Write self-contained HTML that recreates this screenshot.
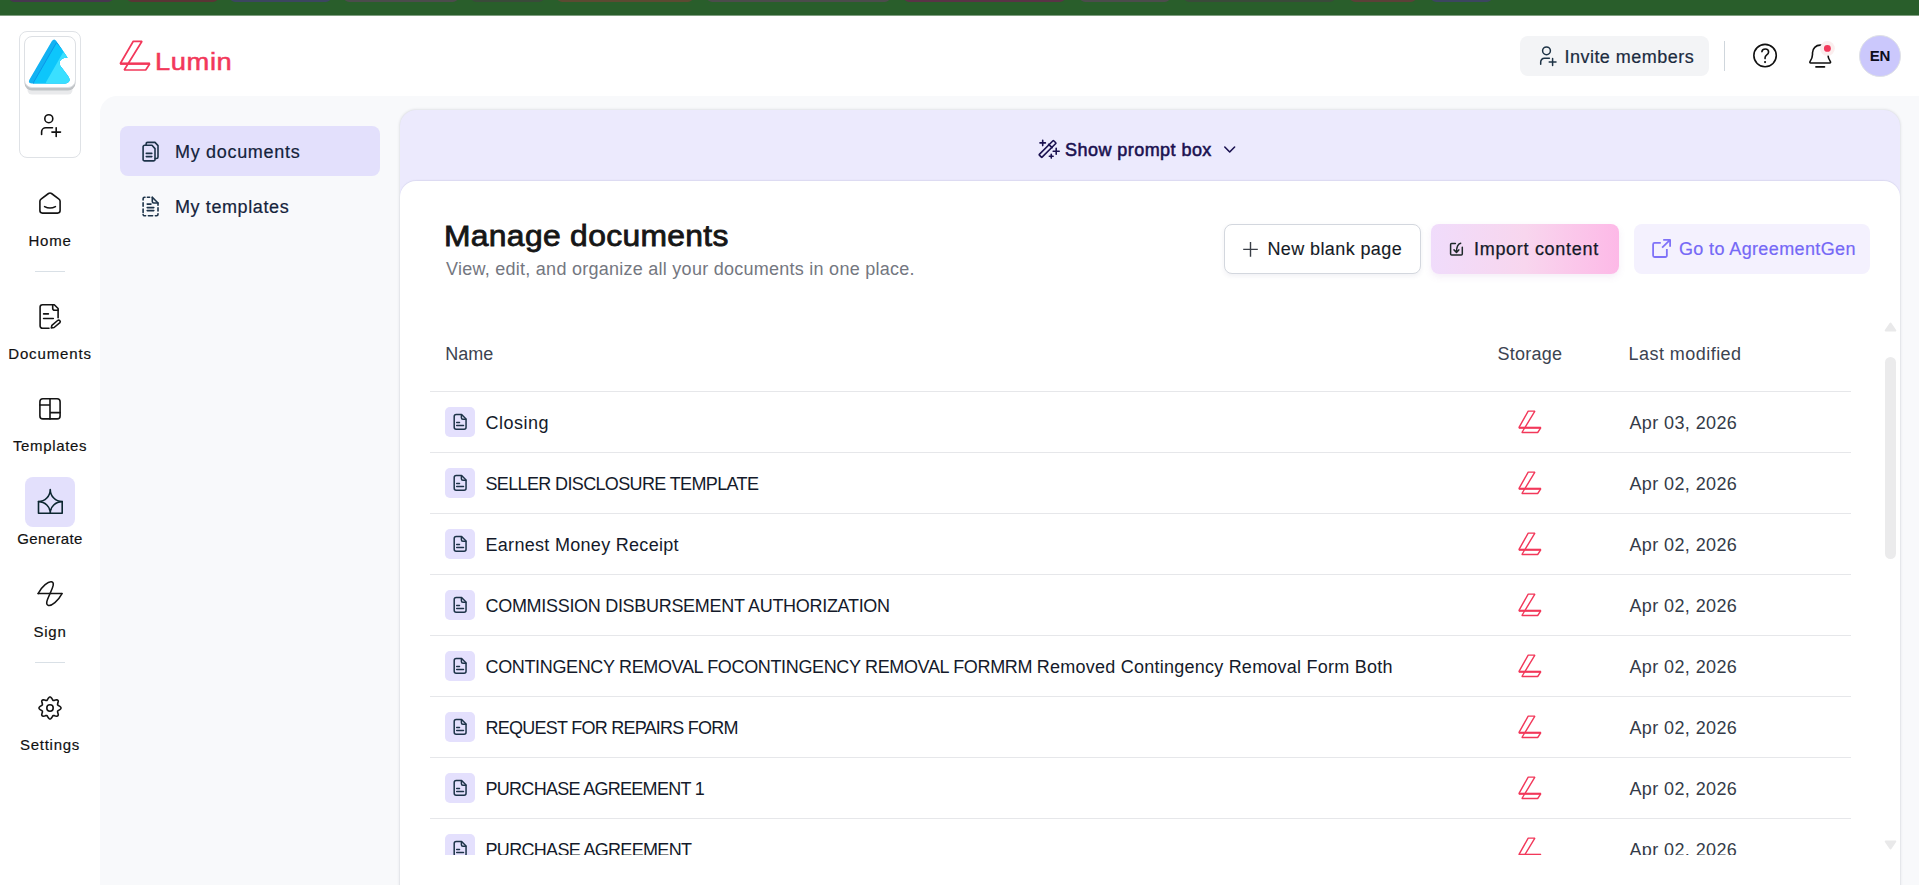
<!DOCTYPE html>
<html lang="en">
<head>
<meta charset="utf-8">
<title>Lumin - Manage documents</title>
<style>
*{box-sizing:border-box;margin:0;padding:0}
html,body{width:1919px;height:885px;overflow:hidden;background:#fff;font-family:"Liberation Sans",Arial,sans-serif;color:#111827}
svg{position:absolute;display:block;overflow:visible}
#topbar{position:absolute;left:0;top:0;width:1919px;height:16px;background:linear-gradient(#295e2b 0,#295e2b 15px,#7f9e80 15px);overflow:hidden}
#topbar i{position:absolute;top:-6px;height:8.2px;border-radius:0 0 5px 5px;display:block}
#graybg{position:absolute;left:100px;top:96px;width:1819px;height:789px;background:#f8f9fb;border-top-left-radius:17px}
#ws{position:absolute;left:19px;top:31px;width:62px;height:127px;border:1px solid #dfe2e6;border-radius:8px;background:#fff}
#avatar{position:absolute;left:24px;top:36px;width:52px;height:52px;border-radius:8px;background:#fff;border:1px solid #dde0e4;box-shadow:0 3px 0 -.5px #c0c3c6,0 10px 0 -3.5px #e9eaec}
.navlbl{position:absolute;left:0;width:100px;text-align:center;font-size:15px;color:#111;line-height:18px;-webkit-text-stroke:.18px #111;white-space:nowrap}
.raildiv{position:absolute;left:35px;width:30px;height:1px;background:#d9e0e6}
#genbg{position:absolute;left:25px;top:477px;width:50px;height:50px;border-radius:8px;background:#e3e0fc}
.st14 g, g.k{fill:none;stroke:#141414;stroke-width:1.6;stroke-linecap:round;stroke-linejoin:round}
#pill{position:absolute;left:120px;top:126px;width:260px;height:50px;border-radius:8px;background:#e3e0fc}
.sidelbl{position:absolute;left:175px;font-size:18px;color:#14233b;line-height:22px;white-space:nowrap;letter-spacing:.6px;-webkit-text-stroke:.2px #14233b}
#lav{position:absolute;left:400px;top:110px;width:1500px;height:780px;background:#eceafd;border-radius:16px 16px 0 0;box-shadow:0 0 3px rgba(50,55,75,.22)}
#card{position:absolute;left:400px;top:181px;width:1500px;height:710px;background:#fff;border-radius:16px 16px 0 0;box-shadow:0 -1px 1px rgba(190,188,220,.35)}
#title{position:absolute;left:444px;top:216.3px;font-size:29px;font-weight:400;color:#161616;-webkit-text-stroke:.8px #161616;line-height:40px;white-space:nowrap;letter-spacing:.3px;transform-origin:0 50%;transform:scaleX(1.097)}
#sub{position:absolute;left:446px;top:258px;font-size:18px;color:#74777f;line-height:22px;white-space:nowrap;letter-spacing:.26px}
.btn{position:absolute;top:224px;height:50px;border-radius:8px}
.btn span{position:absolute;top:14px;font-size:18px;line-height:22px;white-space:nowrap}
.row{position:absolute;left:30px;width:1421px;height:61px;border-bottom:1px solid #e6e7ea}
.row .ic{left:15px;top:15px;width:30px;height:30px}
.row .nm{position:absolute;left:55.5px;top:20px;font-size:18px;line-height:22px;color:#141a2a;white-space:nowrap}
.row .st{left:1085px;top:16px;width:30px;height:28px}
.row .dt{position:absolute;left:1199.4px;top:20px;font-size:18px;line-height:22px;color:#343b48;white-space:nowrap;letter-spacing:.4px}
.th{position:absolute;top:342.5px;font-size:18px;line-height:22px;color:#3c4350;white-space:nowrap}
#clip{position:absolute;left:400px;top:300px;width:1500px;height:555px;overflow:hidden}
</style>
</head>
<body>
<div id="topbar"><i style="left:9px;width:104px;background:#47374f"></i><i style="left:127px;width:91px;background:#5a3535"></i><i style="left:230px;width:101px;background:#3c4660"></i><i style="left:344px;width:114px;background:#4c4c4c"></i><i style="left:471px;width:73px;background:#3a4a3a"></i><i style="left:557px;width:136px;background:#5c4a32"></i><i style="left:707px;width:183px;background:#4c4c4c"></i><i style="left:904px;width:161px;background:#5a3346"></i><i style="left:1080px;width:90px;background:#4c4c4c"></i><i style="left:1184px;width:151px;background:#3a4a3a"></i><i style="left:1350px;width:66px;background:#5c4038"></i><i style="left:1431px;width:61px;background:#3c4660"></i></div>
<div id="graybg"></div>

<!-- left rail -->
<div id="ws"></div>
<div id="avatar"></div>
<svg style="left:24px;top:36px;width:52px;height:52px" viewBox="24 36 52 52">
<defs><clipPath id="tri"><path d="M51.9 41Q54.2 37.9 56.3 41L67.6 57.7Q60.5 57.5 59.6 62.5Q59.5 65.5 62 68L68 76Q70.5 79.5 69 81.5Q68 83.5 65 83.5H32Q27.5 83.5 29.5 79.5Z"/></clipPath></defs>
<g clip-path="url(#tri)"><rect x="24" y="36" width="52" height="52" fill="#12b2f3"/><path d="M56.5 42.5L72 60V86H33L33.8 81.9Z" fill="#0dc6fb" stroke="#0b93e6" stroke-width=".9"/><path d="M63 52.4L74 52V86H44.6L46.1 82Z" fill="#3adfff"/></g>
</svg>
<svg style="left:36px;top:110px;width:28px;height:28px" viewBox="36 110 28 28"><g class="k" style="stroke:#111;stroke-width:1.6"><circle cx="48.8" cy="118.7" r="4"/><path d="M41.6 134.4V132a4.2 4.2 0 0 1 4.2-4.2H52.5"/><path d="M51.9 132.1H60.5M56.2 127.8V136.4"/></g></svg>

<svg style="left:36px;top:189px;width:28px;height:28px" viewBox="0 0 28 28"><g class="k"><path d="M3.9 12.3V21.6a2.5 2.5 0 0 0 2.5 2.5H21.6a2.5 2.5 0 0 0 2.5-2.5V12.3a2.6 2.6 0 0 0-1.1-2.1L15.5 4.5a2.6 2.6 0 0 0-3 0L5 10.2a2.6 2.6 0 0 0-1.1 2.1Z"/><path d="M8.6 17.6Q14 20.5 19.4 17.6"/></g></svg>
<div class="navlbl" style="top:231.6px;letter-spacing:.75px">Home</div>
<div class="raildiv" style="top:271px"></div>
<svg style="left:36px;top:302px;width:28px;height:28px" viewBox="0 0 28 28"><g class="k"><path d="M13 26.3H6.5a2.4 2.4 0 0 1-2.4-2.4V5.1a2.4 2.4 0 0 1 2.4-2.4H18.3L22.1 6.5V15.8"/><path d="M16.7 3.2V6.3a2 2 0 0 0 2 2H22.1"/><path d="M7.6 11.9H12.4M7.6 16.5H17.3"/><path d="M15.3 25.9L15.9 23.3L21.6 18.5a1.6 1.6 0 0 1 2.3 2.2L18.1 25.5Z"/></g></svg>
<div class="navlbl" style="top:344.6px;letter-spacing:.85px">Documents</div>
<svg style="left:36px;top:395px;width:28px;height:28px" viewBox="0 0 28 28"><g class="k"><rect x="3.9" y="3.7" width="20.2" height="20.2" rx="3"/><path d="M14 3.7V23.9M3.9 10H14M14 17.6H24.1"/></g></svg>
<div class="navlbl" style="top:437.3px;letter-spacing:.65px">Templates</div>
<div id="genbg"></div>
<svg style="left:36px;top:488px;width:28px;height:28px" viewBox="0 0 28 28"><g class="k" style="stroke:#0c2630"><path d="M14.25 1.5A11.95 12.1 0 0 0 26.2 13.6A11.95 11.7 0 0 0 14.25 25.3A11.75 11.7 0 0 0 2.5 13.6A11.75 12.1 0 0 0 14.25 1.5Z"/><path d="M2.5 13.6V25.3H26.2V13.6"/></g></svg>
<div class="navlbl" style="top:530.2px;letter-spacing:.4px">Generate</div>
<svg style="left:36px;top:580px;width:28px;height:28px" viewBox="0 0 28 28"><g class="k" style="stroke-width:1.5"><path d="M2.1 13.6H26"/><path d="M2.1 13.6C6 6 12.5 1.2 15.5 1.8C19.5 2.6 16 9 14 13.6C12 18.2 8.5 24.6 12.5 25.4C15.5 26 22 21.2 26 13.6"/></g></svg>
<div class="navlbl" style="top:623px;letter-spacing:.8px">Sign</div>
<div class="raildiv" style="top:662px"></div>
<svg style="left:36px;top:693.6px;width:28px;height:28px" viewBox="0 0 28 28"><g class="k"><path d="M14.0 2.9L15.0 3.4L15.9 4.5L16.5 5.7L17.1 6.4L18.1 6.4L19.4 6.0L20.8 5.7L21.8 6.2L22.3 7.2L22.0 8.6L21.6 9.9L21.6 10.9L22.3 11.5L23.5 12.1L24.6 13.0L25.1 14.0L24.6 15.0L23.5 15.9L22.3 16.5L21.6 17.1L21.6 18.1L22.0 19.4L22.3 20.8L21.8 21.8L20.8 22.3L19.4 22.0L18.1 21.6L17.1 21.6L16.5 22.3L15.9 23.5L15.0 24.6L14.0 25.1L13.0 24.6L12.1 23.5L11.5 22.3L10.9 21.6L9.9 21.6L8.6 22.0L7.2 22.3L6.2 21.8L5.7 20.8L6.0 19.4L6.4 18.1L6.4 17.1L5.7 16.5L4.5 15.9L3.4 15.0L2.9 14.0L3.4 13.0L4.5 12.1L5.7 11.5L6.4 10.9L6.4 9.9L6.0 8.6L5.7 7.2L6.2 6.2L7.2 5.7L8.6 6.0L9.9 6.4L10.9 6.4L11.5 5.7L12.1 4.5L13.0 3.4Z"/><circle cx="14" cy="14" r="3.2"/></g></svg>
<div class="navlbl" style="top:736.1px;letter-spacing:.75px">Settings</div>

<!-- header -->
<svg style="left:118px;top:38px;width:36px;height:36px" viewBox="118 38 36 36"><path d="M133.3 41.3H142L124.2 70H145.7L149.8 63.7H120.2Z" fill="none" stroke="#f2385a" stroke-width="1.7" stroke-linejoin="bevel"/><path d="M120.2 63.7H149.8" stroke="#f2385a" stroke-width="2.3"/></svg>
<div id="lumin" style="position:absolute;left:154.5px;top:46.6px;font-size:24.8px;line-height:30px;color:#f2385a;letter-spacing:.55px;white-space:nowrap;-webkit-text-stroke:.55px #f2385a;transform-origin:0 50%;transform:scaleX(1.1)">Lumin</div>

<div style="position:absolute;left:1520px;top:36px;width:189px;height:40px;border-radius:8px;background:#f3f4f6"></div>
<svg style="left:1535px;top:44px;width:24px;height:24px" viewBox="0 0 24 24"><g class="k" style="stroke:#1e3346;stroke-width:1.5"><circle cx="11.5" cy="6.8" r="3.9"/><path d="M5.7 20.2V18a3.7 3.7 0 0 1 3.7-3.7H14.4"/><path d="M14.2 18H21M17.6 14.6V21.4"/></g></svg>
<div style="position:absolute;left:1564.5px;top:45.8px;font-size:18px;line-height:22px;color:#1b2b40;letter-spacing:.47px;white-space:nowrap;-webkit-text-stroke:.2px #1b2b40">Invite members</div>
<div style="position:absolute;left:1724px;top:41px;width:1px;height:30px;background:#cfd6dc"></div>
<svg style="left:1752px;top:43px;width:26px;height:26px" viewBox="0 0 26 26"><g class="k" style="stroke:#111"><circle cx="13.06" cy="12.6" r="11.2"/><path d="M9.9 8.6C10.2 6.9 11.6 6 13.3 6C15.3 6 16.6 7.3 16.6 9C16.6 10.6 15.6 11.4 14.5 12.2C13.5 12.9 13.06 13.6 13.06 14.8V15.6"/></g><circle cx="13.06" cy="19.1" r="1.05" fill="#111"/></svg>
<svg style="left:1806px;top:40px;width:30px;height:30px" viewBox="0 0 30 30"><g class="k" style="stroke:#111"><path d="M4.6 23C3.9 23 3.6 22.2 4 21.6C5.5 19.4 6.5 17.6 6.5 14.5V12.8A7.7 7.7 0 0 1 21.9 12.8V14.5C21.9 17.6 22.9 19.4 24.4 21.6C24.8 22.2 24.5 23 23.8 23Z"/><path d="M9.9 26.9H18.5"/></g><circle cx="21.4" cy="8.4" r="7.4" fill="#fbeeee"/><circle cx="21.4" cy="8.4" r="3.46" fill="#f2385a"/></svg>
<div style="position:absolute;left:1859px;top:35px;width:42px;height:42px;border-radius:50%;background:#cbc8fc;border:1px solid #dfe1e6"></div>
<div style="position:absolute;left:1860px;top:46.7px;width:40px;text-align:center;font-size:15px;font-weight:700;line-height:18px;color:#0d0d1c;letter-spacing:-.1px">EN</div>

<!-- secondary sidebar -->
<div id="pill"></div>
<svg style="left:139px;top:139px;width:24px;height:24px" viewBox="0 0 24 24"><g class="k" style="stroke:#1d3349"><path d="M5.6 6.3H13L16 9.6V20.4a1.5 1.5 0 0 1-1.5 1.5H5.6a1.5 1.5 0 0 1-1.5-1.5V7.8a1.5 1.5 0 0 1 1.5-1.5Z"/><path d="M7.1 6V4.9a1.5 1.5 0 0 1 1.5-1.5H16L19 6.6V18a1.5 1.5 0 0 1-1.5 1.5H16.3"/><path d="M7.3 14.4H12.8M7.3 17.6H12.8"/></g></svg>
<div class="sidelbl" style="top:140.6px;letter-spacing:.69px">My documents</div>
<svg style="left:139px;top:194px;width:24px;height:24px" viewBox="0 0 24 24"><g class="k" style="stroke:#1d3349"><path d="M13.3 3.3L19 9V11.2" /><path d="M13.3 3.3V7.5a1.5 1.5 0 0 0 1.5 1.5H19"/><path d="M10.6 3.3H8.4M6 3.3H5.6a1.5 1.5 0 0 0-1.5 1.5V6M4.1 8.8V12.2M4.1 15V18.4M4.1 20.6a1.5 1.5 0 0 0 1.5 1.2H6.6M9.4 21.8H13.6M16.4 21.8H17.5a1.5 1.5 0 0 0 1.5-1.5V19.8M19 17V13.8"/><path d="M8.2 10.1H12M8.2 13.6H14.8M8.2 16.6H14.8"/></g></svg>
<div class="sidelbl" style="top:195.6px">My templates</div>

<!-- main -->
<div id="lav"></div>
<svg style="left:1036px;top:137px;width:24px;height:24px" viewBox="0 0 24 24"><g class="k" style="stroke:#1a1150;stroke-width:1.6"><rect x="1.4" y="10" width="20.3" height="3.9" rx=".5" transform="rotate(-45 11.54 11.95)"/><path d="M12.6 7.4L16.1 10.7"/><path d="M4 5.9H9.4M6.7 3.2V8.6M17.2 14.25H23.2M20.2 11.25V17.25M13.35 19.2H17.15M15.25 17.3V21.1"/></g></svg>
<div style="position:absolute;left:1065px;top:138.5px;font-size:18px;line-height:22px;color:#1a1150;white-space:nowrap;letter-spacing:.45px;-webkit-text-stroke:.55px #1a1150">Show prompt box</div>
<svg style="left:1222px;top:143px;width:16px;height:14px" viewBox="1222 143 16 14"><path d="M1224.8 147L1229.7 152L1234.6 147" fill="none" stroke="#1a1150" stroke-width="1.6" stroke-linecap="round" stroke-linejoin="round"/></svg>
<div id="card"></div>
<div id="title">Manage documents</div>
<div id="sub">View, edit, and organize all your documents in one place.</div>

<div class="btn" style="left:1224px;width:197px;background:#fff;border:1px solid #d3d7de;box-shadow:0 2px 5px rgba(40,40,100,.07)"><svg style="left:17px;top:16px;width:17px;height:17px" viewBox="0 0 17 17"><path d="M1.2 8.4H15.8M8.5 1.1V15.7" stroke="#3a3f47" stroke-width="1.4" fill="none"/></svg><span style="left:42.4px;top:13px;color:#161b26;letter-spacing:.4px;-webkit-text-stroke:.12px #161b26">New blank page</span></div>
<div class="btn" style="left:1431px;width:188px;background:linear-gradient(90deg,#f0dcfb 0%,#f8d6ee 50%,#fdb9e7 100%);box-shadow:0 3px 7px rgba(150,90,180,.10)"><svg style="left:15px;top:16px;width:20px;height:20px" viewBox="0 0 20 20"><g class="k" style="stroke:#1f2a2a;stroke-width:1.5"><path d="M9.4 3.5H5.6a1 1 0 0 0-1 1V14a1 1 0 0 0 1 1H15.3a1 1 0 0 0 1-1V7.2"/><path d="M14.7 3.3C12 4 10.5 7 10.5 12M8 9.9L10.5 12.4L12.8 9.9"/></g></svg><span style="left:43px;color:#141a28;letter-spacing:.7px;-webkit-text-stroke:.25px #141a28">Import content</span></div>
<div class="btn" style="left:1634px;width:236px;background:#f4f1fe"><svg style="left:14px;top:12px;width:26px;height:26px" viewBox="0 0 26 26"><g class="k" style="stroke:#7f72f8;stroke-width:1.8;stroke-linecap:butt"><path d="M12.8 6.9H6.6a1.5 1.5 0 0 0-1.5 1.5V19.5a1.5 1.5 0 0 0 1.5 1.5H17.35a1.5 1.5 0 0 0 1.5-1.5V13.1"/><path d="M14.1 11.7L22.1 3.9M15.2 3.9H22.1V10.75"/></g></svg><span style="left:45px;color:#7568f6;letter-spacing:.37px;-webkit-text-stroke:.2px #7568f6">Go to AgreementGen</span></div>

<div class="th" style="left:445.3px">Name</div>
<div class="th" style="left:1497.5px;letter-spacing:.24px">Storage</div>
<div class="th" style="left:1628.6px;letter-spacing:.45px">Last modified</div>
<div id="clip">
<div class="row" style="top:31px"></div>
<div class="row" style="top:92px"><svg class="ic" viewBox="0 0 30 30"><rect width="30" height="30" rx="5" fill="#e4e0fd"/><g fill="none" stroke="#1d3349" stroke-width="1.5" stroke-linecap="round" stroke-linejoin="round"><path d="M11.2 7.55H16.6L21.05 12V20.2a2 2 0 0 1-2 2H11.2a2 2 0 0 1-2-2V9.55a2 2 0 0 1 2-2Z"/><path d="M16.4 7.8V10.7a1.5 1.5 0 0 0 1.5 1.5H20.8"/><path d="M11.7 15.4H14.5M11.7 18.4H18.5"/></g></svg><div class="nm"><span style="letter-spacing:0.5px">Closing</span></div><svg class="st" viewBox="0 0 30 28"><path d="M13.2 3.1H19.9L6.9 24.5H22.7L25.9 19.7H3.9Z" fill="none" stroke="#f2385a" stroke-width="1.4" stroke-linejoin="bevel"/><path d="M3.9 19.7H25.9" stroke="#f2385a" stroke-width="2"/></svg><div class="dt">Apr 03, 2026</div></div>
<div class="row" style="top:153px"><svg class="ic" viewBox="0 0 30 30"><rect width="30" height="30" rx="5" fill="#e4e0fd"/><g fill="none" stroke="#1d3349" stroke-width="1.5" stroke-linecap="round" stroke-linejoin="round"><path d="M11.2 7.55H16.6L21.05 12V20.2a2 2 0 0 1-2 2H11.2a2 2 0 0 1-2-2V9.55a2 2 0 0 1 2-2Z"/><path d="M16.4 7.8V10.7a1.5 1.5 0 0 0 1.5 1.5H20.8"/><path d="M11.7 15.4H14.5M11.7 18.4H18.5"/></g></svg><div class="nm"><span style="letter-spacing:-0.64px">SELLER DISCLOSURE TEMPLATE</span></div><svg class="st" viewBox="0 0 30 28"><path d="M13.2 3.1H19.9L6.9 24.5H22.7L25.9 19.7H3.9Z" fill="none" stroke="#f2385a" stroke-width="1.4" stroke-linejoin="bevel"/><path d="M3.9 19.7H25.9" stroke="#f2385a" stroke-width="2"/></svg><div class="dt">Apr 02, 2026</div></div>
<div class="row" style="top:214px"><svg class="ic" viewBox="0 0 30 30"><rect width="30" height="30" rx="5" fill="#e4e0fd"/><g fill="none" stroke="#1d3349" stroke-width="1.5" stroke-linecap="round" stroke-linejoin="round"><path d="M11.2 7.55H16.6L21.05 12V20.2a2 2 0 0 1-2 2H11.2a2 2 0 0 1-2-2V9.55a2 2 0 0 1 2-2Z"/><path d="M16.4 7.8V10.7a1.5 1.5 0 0 0 1.5 1.5H20.8"/><path d="M11.7 15.4H14.5M11.7 18.4H18.5"/></g></svg><div class="nm"><span style="letter-spacing:0.3px">Earnest Money Receipt</span></div><svg class="st" viewBox="0 0 30 28"><path d="M13.2 3.1H19.9L6.9 24.5H22.7L25.9 19.7H3.9Z" fill="none" stroke="#f2385a" stroke-width="1.4" stroke-linejoin="bevel"/><path d="M3.9 19.7H25.9" stroke="#f2385a" stroke-width="2"/></svg><div class="dt">Apr 02, 2026</div></div>
<div class="row" style="top:275px"><svg class="ic" viewBox="0 0 30 30"><rect width="30" height="30" rx="5" fill="#e4e0fd"/><g fill="none" stroke="#1d3349" stroke-width="1.5" stroke-linecap="round" stroke-linejoin="round"><path d="M11.2 7.55H16.6L21.05 12V20.2a2 2 0 0 1-2 2H11.2a2 2 0 0 1-2-2V9.55a2 2 0 0 1 2-2Z"/><path d="M16.4 7.8V10.7a1.5 1.5 0 0 0 1.5 1.5H20.8"/><path d="M11.7 15.4H14.5M11.7 18.4H18.5"/></g></svg><div class="nm"><span style="letter-spacing:-0.3px">COMMISSION DISBURSEMENT AUTHORIZATION</span></div><svg class="st" viewBox="0 0 30 28"><path d="M13.2 3.1H19.9L6.9 24.5H22.7L25.9 19.7H3.9Z" fill="none" stroke="#f2385a" stroke-width="1.4" stroke-linejoin="bevel"/><path d="M3.9 19.7H25.9" stroke="#f2385a" stroke-width="2"/></svg><div class="dt">Apr 02, 2026</div></div>
<div class="row" style="top:336px"><svg class="ic" viewBox="0 0 30 30"><rect width="30" height="30" rx="5" fill="#e4e0fd"/><g fill="none" stroke="#1d3349" stroke-width="1.5" stroke-linecap="round" stroke-linejoin="round"><path d="M11.2 7.55H16.6L21.05 12V20.2a2 2 0 0 1-2 2H11.2a2 2 0 0 1-2-2V9.55a2 2 0 0 1 2-2Z"/><path d="M16.4 7.8V10.7a1.5 1.5 0 0 0 1.5 1.5H20.8"/><path d="M11.7 15.4H14.5M11.7 18.4H18.5"/></g></svg><div class="nm"><span style="letter-spacing:-0.35px">CONTINGENCY REMOVAL FOCONTINGENCY REMOVAL FORMRM </span><span style="letter-spacing:0.24px">Removed Contingency Removal Form Both</span></div><svg class="st" viewBox="0 0 30 28"><path d="M13.2 3.1H19.9L6.9 24.5H22.7L25.9 19.7H3.9Z" fill="none" stroke="#f2385a" stroke-width="1.4" stroke-linejoin="bevel"/><path d="M3.9 19.7H25.9" stroke="#f2385a" stroke-width="2"/></svg><div class="dt">Apr 02, 2026</div></div>
<div class="row" style="top:397px"><svg class="ic" viewBox="0 0 30 30"><rect width="30" height="30" rx="5" fill="#e4e0fd"/><g fill="none" stroke="#1d3349" stroke-width="1.5" stroke-linecap="round" stroke-linejoin="round"><path d="M11.2 7.55H16.6L21.05 12V20.2a2 2 0 0 1-2 2H11.2a2 2 0 0 1-2-2V9.55a2 2 0 0 1 2-2Z"/><path d="M16.4 7.8V10.7a1.5 1.5 0 0 0 1.5 1.5H20.8"/><path d="M11.7 15.4H14.5M11.7 18.4H18.5"/></g></svg><div class="nm"><span style="letter-spacing:-0.75px">REQUEST FOR REPAIRS FORM</span></div><svg class="st" viewBox="0 0 30 28"><path d="M13.2 3.1H19.9L6.9 24.5H22.7L25.9 19.7H3.9Z" fill="none" stroke="#f2385a" stroke-width="1.4" stroke-linejoin="bevel"/><path d="M3.9 19.7H25.9" stroke="#f2385a" stroke-width="2"/></svg><div class="dt">Apr 02, 2026</div></div>
<div class="row" style="top:458px"><svg class="ic" viewBox="0 0 30 30"><rect width="30" height="30" rx="5" fill="#e4e0fd"/><g fill="none" stroke="#1d3349" stroke-width="1.5" stroke-linecap="round" stroke-linejoin="round"><path d="M11.2 7.55H16.6L21.05 12V20.2a2 2 0 0 1-2 2H11.2a2 2 0 0 1-2-2V9.55a2 2 0 0 1 2-2Z"/><path d="M16.4 7.8V10.7a1.5 1.5 0 0 0 1.5 1.5H20.8"/><path d="M11.7 15.4H14.5M11.7 18.4H18.5"/></g></svg><div class="nm"><span style="letter-spacing:-0.71px">PURCHASE AGREEMENT 1</span></div><svg class="st" viewBox="0 0 30 28"><path d="M13.2 3.1H19.9L6.9 24.5H22.7L25.9 19.7H3.9Z" fill="none" stroke="#f2385a" stroke-width="1.4" stroke-linejoin="bevel"/><path d="M3.9 19.7H25.9" stroke="#f2385a" stroke-width="2"/></svg><div class="dt">Apr 02, 2026</div></div>
<div class="row" style="top:519px"><svg class="ic" viewBox="0 0 30 30"><rect width="30" height="30" rx="5" fill="#e4e0fd"/><g fill="none" stroke="#1d3349" stroke-width="1.5" stroke-linecap="round" stroke-linejoin="round"><path d="M11.2 7.55H16.6L21.05 12V20.2a2 2 0 0 1-2 2H11.2a2 2 0 0 1-2-2V9.55a2 2 0 0 1 2-2Z"/><path d="M16.4 7.8V10.7a1.5 1.5 0 0 0 1.5 1.5H20.8"/><path d="M11.7 15.4H14.5M11.7 18.4H18.5"/></g></svg><div class="nm"><span style="letter-spacing:-0.68px">PURCHASE AGREEMENT</span></div><svg class="st" viewBox="0 0 30 28"><path d="M13.2 3.1H19.9L6.9 24.5H22.7L25.9 19.7H3.9Z" fill="none" stroke="#f2385a" stroke-width="1.4" stroke-linejoin="bevel"/><path d="M3.9 19.7H25.9" stroke="#f2385a" stroke-width="2"/></svg><div class="dt">Apr 02, 2026</div></div>
</div>
<!-- scrollbar -->
<svg style="left:1884px;top:322px;width:13px;height:10px" viewBox="0 0 13 10"><path d="M6.5 1.6L11.3 8.6H1.7Z" fill="#e9e9ea" stroke="#e9e9ea" stroke-width="2" stroke-linejoin="round"/></svg>
<div style="position:absolute;left:1885px;top:357px;width:11px;height:202px;border-radius:6px;background:#ebebec"></div>
<svg style="left:1884px;top:840px;width:13px;height:10px" viewBox="0 0 13 10"><path d="M6.5 8.4L11.3 1.4H1.7Z" fill="#e9e9ea" stroke="#e9e9ea" stroke-width="2" stroke-linejoin="round"/></svg>
</body>
</html>
